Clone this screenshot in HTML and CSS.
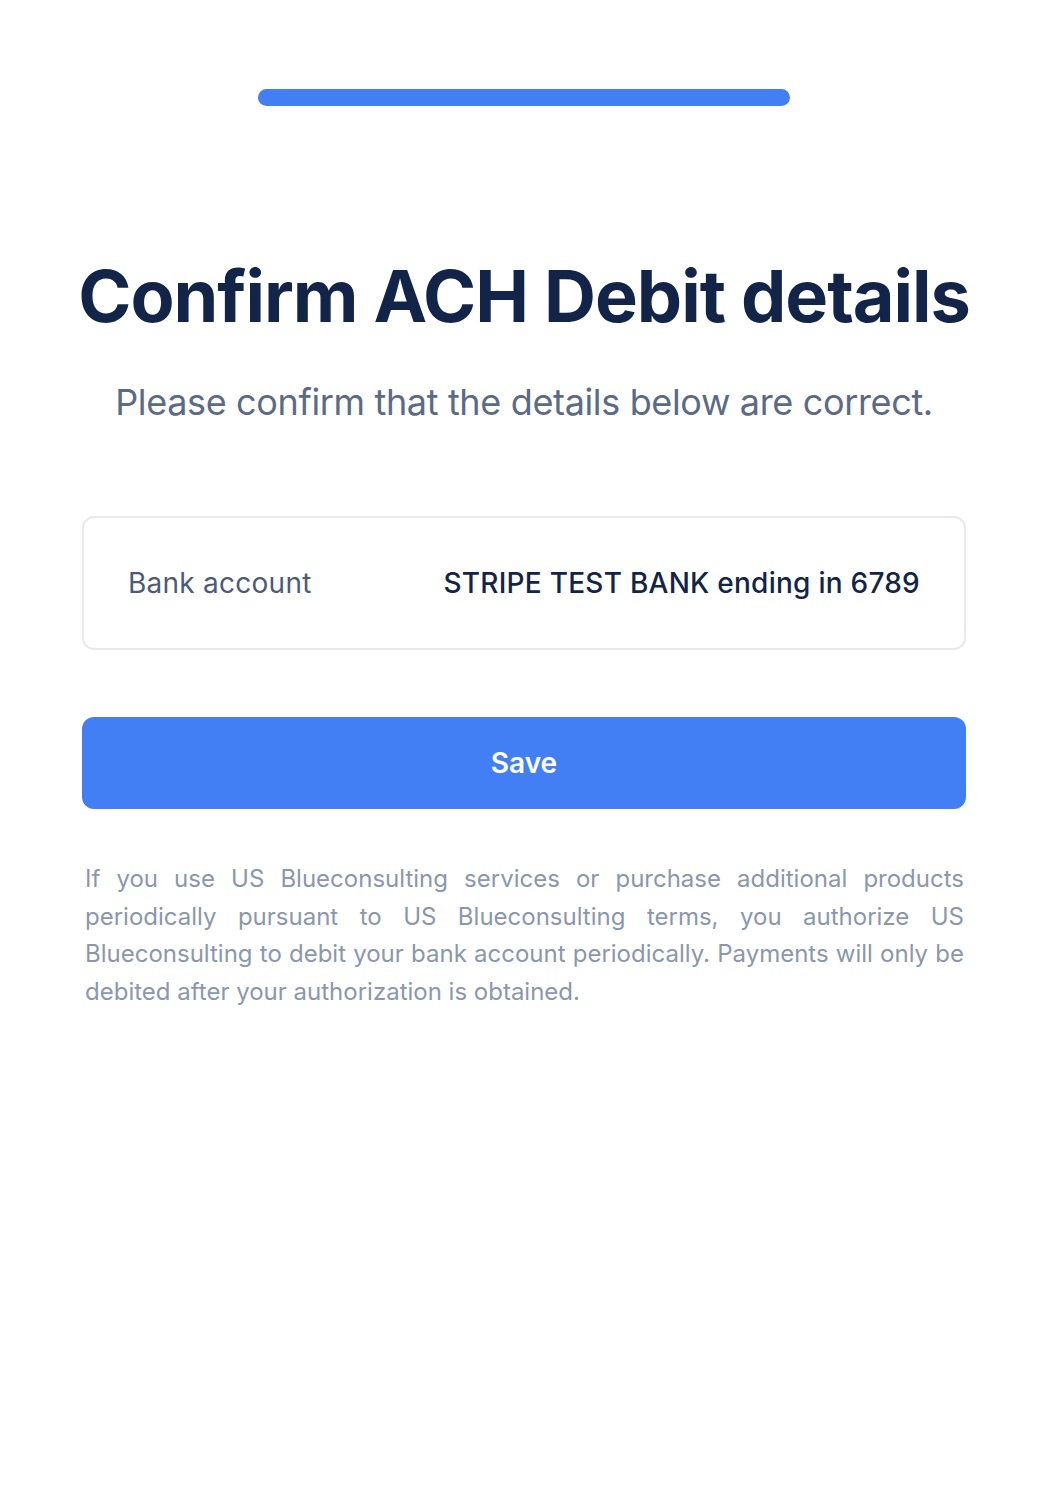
FILE: index.html
```html
<!DOCTYPE html>
<html>
<head>
    <meta charset="UTF-8">
    <title>Confirm ACH Debit details</title>
    <link rel="stylesheet" href="styles.css">
</head>
<body>
<div class="page">
    <div class="progress"></div>

    <h1 class="title">Confirm ACH Debit details</h1>
    <p class="subtitle">Please confirm that the details below are correct.</p>

    <div class="details">
        <span class="details-label">Bank account</span>
        <span class="details-value">STRIPE TEST BANK ending in 6789</span>
    </div>

    <button class="save" type="button">Save</button>

    <p class="terms">If you use US Blueconsulting services or purchase additional products periodically pursuant to US Blueconsulting terms, you authorize US Blueconsulting to debit your bank account periodically. Payments will only be debited after your authorization is obtained.</p>
</div>
</body>
</html>
```

FILE: styles.css
```css
* {
    margin: 0;
    padding: 0;
    box-sizing: border-box;
}

html, body {
    width: 100%;
    background: #fff;
}

body {
    font-family: Inter, "Noto Sans", sans-serif;
    color: #122448;
}

.page {
    width: 884px;
    margin-left: 82px;
    padding-top: 89px;
    display: flex;
    flex-direction: column;
}

.progress {
    width: 532px;
    height: 17px;
    margin-left: 176px;
    border-radius: 9px;
    background: #427ff4;
}

.title {
    margin-top: 147px;
    margin-left: -10px;
    margin-right: -10px;
    font-size: 72px;
    line-height: 86px;
    font-weight: 700;
    text-align: center;
    white-space: nowrap;
    letter-spacing: -1.05px;
    color: #122448;
}

.subtitle {
    margin-top: 36px;
    font-size: 36px;
    line-height: 54px;
    text-align: center;
    letter-spacing: -0.35px;
    color: #5b6b86;
}

.details {
    margin-top: 87px;
    padding: 45px 44px;
    border: 2px solid #e7e9ee;
    border-radius: 12px;
    display: flex;
    justify-content: space-between;
    align-items: center;
    font-size: 28px;
    line-height: 40px;
}

.details-label {
    color: #4b5b79;
    letter-spacing: 0.25px;
}

.details-value {
    font-weight: 500;
    letter-spacing: 0.25px;
    color: #122448;
}

.save {
    margin-top: 67px;
    height: 92px;
    border: 0;
    border-radius: 12px;
    background: #427ff4;
    color: #fff;
    font-family: inherit;
    font-size: 28px;
    font-weight: 600;
    cursor: pointer;
}

.terms {
    margin-top: 51px;
    padding: 0 2px 0 3px;
    font-size: 24px;
    line-height: 37.5px;
    text-align: justify;
    color: #8b97ab;
}
```
